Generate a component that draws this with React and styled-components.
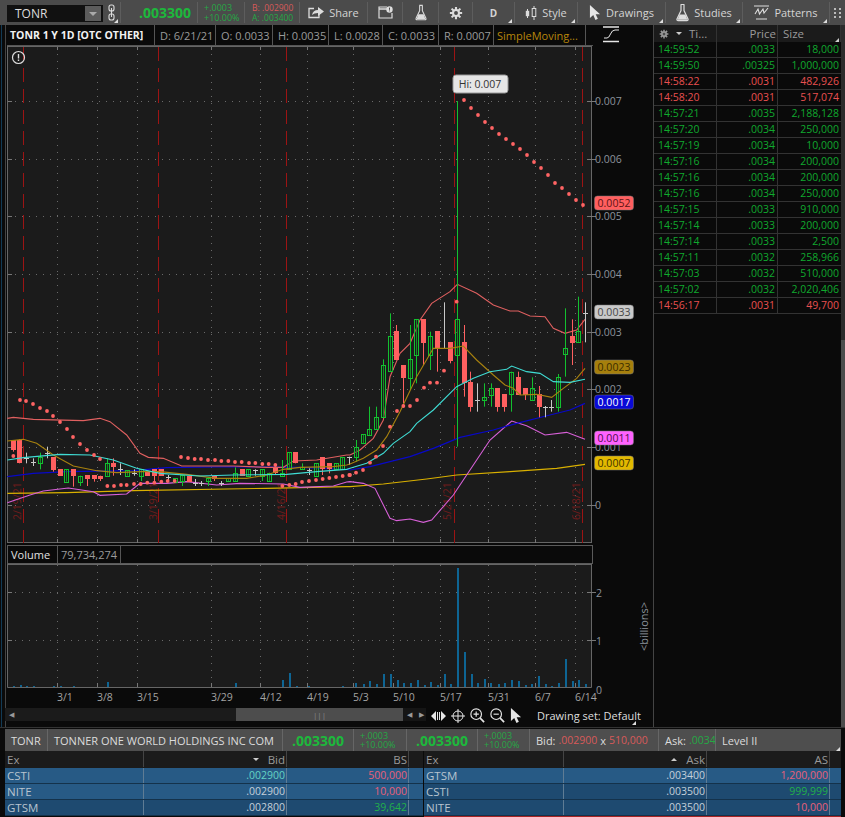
import React from 'react';
import styled, { createGlobalStyle } from 'styled-components';

const GlobalStyle = createGlobalStyle`
  html, body {
    margin: 0;
    width: 845px;
    height: 817px;
    overflow: hidden;
    background: #0a0a0a;
    font-family: "Open Sans", "Liberation Sans", sans-serif;
    font-size: 11px;
  }
  * { box-sizing: border-box; }
`;

const Page = styled.div`
  width: 845px;
  height: 817px;
  display: flex;
  flex-direction: column;
`;

/* top toolbar */
const Toolbar = styled.div`
  height: 25px;
  display: flex;
  align-items: stretch;
  padding: 2px 0 2px 7px;
  background: #4b4b4b;
  color: #d4d4d4;
`;

const SymbolBox = styled.div`
  width: 96px;
  height: 17px;
  margin-top: 3px;
  display: flex;
  align-items: center;
  justify-content: space-between;
  padding: 0 2px 0 8px;
  background: #111;
  color: #ddd;
  font-size: 12px;
`;

const SymbolCaret = styled.div`
  width: 16px;
  height: 15px;
  background: #5c5c5c;
  display: flex;
  align-items: center;
  justify-content: center;
  &::after {
    content: '';
    border-left: 4px solid transparent;
    border-right: 4px solid transparent;
    border-top: 4px solid #aaa;
  }
`;

const ToolCell = styled.div`
  position: relative;
  width: ${p => p.$w}px;
  display: flex;
  align-items: center;
  justify-content: ${p => p.$pl ? 'flex-start' : 'center'};
  gap: 5px;
  padding-left: ${p => p.$pl || 0}px;
  border-right: ${p => p.$plain ? 'none' : '1px solid #5d5d5d'};
  font-size: ${p => p.$size || 11}px;
  font-weight: ${p => p.$bold ? 700 : 400};
  white-space: nowrap;
  ${p => p.$corner && `
    &::after {
      content: '';
      position: absolute;
      right: 2px;
      bottom: 0;
      border-left: 4px solid transparent;
      border-bottom: 4px solid #ddd;
    }
  `}
`;

const BigPrice = styled.span`
  color: #1db83c;
  font-weight: 700;
  font-size: 14px;
`;

const TwoLine = styled.div`
  display: flex;
  flex-direction: column;
  font-size: ${p => p.$size || 9}px;
  line-height: 9.5px;
`;

const Tiny = styled.span`
  color: ${p => p.$red ? '#d85a5a' : '#25a845'};
  font-size: ${p => p.$size ? `${p.$size}px` : 'inherit'};
`;

/* main area */
const Main = styled.div`
  height: 702px;
  display: flex;
`;

const ChartColumn = styled.div`
  width: 654px;
  display: flex;
  flex-direction: column;
  border-right: 1px solid #444;
  background: linear-gradient(to right, #0a0a0a 1px, #123a55 1px, #123a55 2px, #0a0a0a 2px, #0a0a0a 5px, #444 5px, #444 6px, #0a0a0a 6px);
`;

const LegendRow = styled.div`
  height: 21px;
  margin-left: 7px;
  display: flex;
  align-items: stretch;
`;

const LegendBar = styled.div`
  width: 586px;
  display: flex;
  background: #0a0a0a;
  border-bottom: 1px solid #555;
`;

const LegendCell = styled.div`
  width: ${p => p.$w}px;
  display: flex;
  align-items: center;
  padding-left: ${p => p.$pad ?? 5}px;
  color: ${p => p.$color || '#9a9a9a'};
  font-weight: ${p => p.$bold ? 700 : 400};
  font-size: ${p => p.$bold ? 10.5 : 11}px;
  border-right: 1px solid #555;
  white-space: nowrap;
  overflow: hidden;
`;

const StudyButton = styled.div`
  padding: 1px 0 0 10px;
`;

const VolumeLegend = styled.div`
  height: 19px;
  margin: 2px 0 0 7px;
  width: 586px;
  display: flex;
  background: #0a0a0a;
  border: 1px solid #5a5a5a;
`;

const PlotSvg = styled.svg`
  display: block;
  flex: none;
`;

const AxisText = styled.text`
  fill: #8c939b;
  font-size: 10.5px;
  dominant-baseline: central;
`;

const BillionsText = styled(AxisText)`
  font-size: 11px;
`;

const BadgeText = styled.text`
  font-size: 10.5px;
  dominant-baseline: central;
  text-anchor: middle;
`;

const DateText = styled.text`
  fill: #a3a3a3;
  font-size: 10.5px;
`;

const MarkerText = styled.text`
  fill: #701c1c;
  font-size: 10.5px;
`;

const ScrollRow = styled.div`
  height: 20px;
  margin-left: 5px;
  display: flex;
  align-items: flex-start;
  padding-top: 1px;
  color: #ddd;
`;

const Track = styled.div`
  width: 398px;
  height: 13px;
  display: flex;
  justify-content: flex-end;
  background: #1b1b1b;
`;

const Thumb = styled.div`
  width: 167px;
  height: 13px;
  background: #4d4d4d;
  display: flex;
  align-items: center;
  justify-content: center;
  color: #888;
  font-size: 8px;
`;

const ArrowBtn = styled.div`
  width: ${p => p.$w || 13}px;
  height: 13px;
  background: #151515;
  color: #999;
  font-size: 7px;
  display: flex;
  align-items: center;
  justify-content: center;
`;

const TrackStartArrow = styled(ArrowBtn)`
  position: relative;
  margin-right: -13px;
  background: transparent;
`;

const ScrollTools = styled.div`
  display: flex;
  align-items: center;
  gap: 5px;
  margin-left: 5px;
  height: 15px;
`;

const DrawingSet = styled.div`
  position: relative;
  width: 116px;
  height: 15px;
  padding-left: 15px;
  font-size: 11px;
  line-height: 15px;
  color: #ddd;
  white-space: nowrap;
  &::after {
    content: '';
    position: absolute;
    right: 2px;
    bottom: -2px;
    border-left: 4px solid transparent;
    border-bottom: 4px solid #ddd;
  }
`;

/* time and sales */
const TimeSales = styled.div`
  flex: 1;
  display: flex;
  position: relative;
  background: #0a0a0a;
`;

const TsTable = styled.div`
  width: 187px;
`;

const TsHeader = styled.div`
  height: 17px;
  display: grid;
  grid-template-columns: 63px 61px 63px;
  background: #1b1b1b;
  color: #9a9a9a;
`;

const TsHeadCell = styled.div`
  position: relative;
  display: flex;
  align-items: center;
  justify-content: ${p => p.$align || 'flex-start'};
  gap: 7px;
  padding: 0 ${p => p.$pr ?? 5}px 0 5px;
  border-right: 1px solid #333;
  font-size: 11.5px;
  ${p => p.$corner && `
    &::after {
      content: '';
      position: absolute;
      right: 1px;
      bottom: 0;
      border-left: 4px solid transparent;
      border-bottom: 4px solid #ccc;
    }
  `}
`;

const Caret = styled.span`
  border-left: 3px solid transparent;
  border-right: 3px solid transparent;
  ${p => p.$up ? 'border-bottom: 3px solid #ccc;' : 'border-top: 3px solid #ccc;'}
`;

const TsRow = styled.div`
  height: 16px;
  display: grid;
  grid-template-columns: 63px 61px 63px;
  border-bottom: 1px solid #333;
  color: ${p => p.$sell ? '#e85050' : '#10a82e'};
  font-size: 10.5px;
  line-height: 15px;
`;

const TsCell = styled.div`
  text-align: ${p => p.$right ? 'right' : 'left'};
  padding: ${p => p.$right ? '0 2px 0 0' : '0 0 0 4px'};
  border-right: ${p => p.$last ? 'none' : '1px solid #333'};
  white-space: nowrap;
`;

const ScrollEdge = styled.div`
  flex: 1;
  background: linear-gradient(to bottom, #2c2c2c 315px, #4c4c4c 315px);
`;

/* level II */
const Bottom = styled.div`
  flex: 1;
  padding: 1px 4px 0 5px;
  border-top: 1px solid #333;
`;

const QuoteBar = styled.div`
  height: 22px;
  display: flex;
  background: #4e4e4e;
  color: #dcdcdc;
  font-size: 11px;
`;

const QuoteCell = styled.div`
  position: relative;
  width: ${p => p.$w}px;
  flex: ${p => p.$w ? 'none' : 1};
  display: flex;
  align-items: center;
  justify-content: ${p => p.$center ? 'center' : 'flex-start'};
  gap: 3px;
  padding-left: ${p => p.$center ? 0 : 6}px;
  border-right: ${p => p.$last ? 'none' : '1px solid #666'};
  white-space: nowrap;
  overflow: hidden;
  ${p => p.$last && `
    &::after {
      content: '';
      position: absolute;
      right: 1px;
      bottom: 0;
      border-left: 4px solid transparent;
      border-bottom: 4px solid #ddd;
    }
  `}
`;

const Books = styled.div`
  display: flex;
  gap: 1px;
`;

const BookTable = styled.div`
  width: ${p => p.$w}px;
  display: flex;
  flex-direction: column;
  border-bottom: 1px solid ${p => p.$alert ? '#a82424' : 'transparent'};
`;

const BookRow = styled.div`
  height: ${p => p.$h || 16}px;
  display: grid;
  grid-template-columns: ${p => p.$cols};
  background: ${p => p.$bg};
  border-bottom: 1px solid ${p => p.$head ? '#1b1b1b' : '#14324b'};
  color: ${p => p.$head ? '#999' : '#b8c4cf'};
  font-size: 11.5px;
  line-height: 15px;
`;

const BookCell = styled.div`
  display: flex;
  align-items: center;
  justify-content: ${p => p.$right ? 'flex-end' : 'flex-start'};
  gap: 9px;
  padding: 0 ${p => p.$right ? 1 : 2}px;
  color: ${p => p.$color || 'inherit'};
  font-size: ${p => p.$num ? 10.5 : 11.5}px;
  border-right: 1px solid ${p => p.$line || 'transparent'};
`;

const GREEN = '#13c02f';
const RED = '#ff6060';
const WHITE = '#c8c8c8';
const z6 = ([x, y]) => [x / 3, 380 + y / 3];
const z5 = ([x, y]) => [350 + x / 3, 280 + y / 3];
const line = pts => pts.map(p => p.join(',')).join(' ');

// [x, wickTop, wickBottom, bodyTop, bodyBottom, kind]
const leftCandles = [
  [40, 180, 215, 180, 210, 'r'], [58, 178, 250, 180, 250, 'r'], [79, 218, 250, 235, 236, 'w'], [100, 235, 258, 245, 246, 'w'],
  [119, 218, 268, 232, 250, 'g'], [140, 200, 235, 220, 221, 'w'], [160, 232, 275, 232, 270, 'r'], [181, 268, 288, 268, 288, 'r'],
  [199, 268, 305, 268, 305, 'g'], [220, 268, 320, 268, 288, 'r'], [241, 287, 318, 287, 305, 'g'], [262, 285, 318, 285, 297, 'r'],
  [281, 285, 305, 285, 297, 'r'], [301, 287, 303, 287, 297, 'r'], [322, 235, 287, 250, 287, 'g'], [340, 235, 287, 250, 262, 'r'],
  [361, 250, 285, 268, 269, 'w'], [382, 270, 287, 270, 287, 'g'], [402, 268, 287, 280, 281, 'w'], [422, 268, 303, 268, 287, 'g'],
  [442, 275, 287, 275, 287, 'r'], [463, 268, 303, 268, 287, 'r'], [484, 268, 287, 268, 287, 'r'], [503, 285, 305, 292, 293, 'w'],
  [524, 295, 305, 295, 305, 'g'], [545, 285, 318, 285, 303, 'g'], [566, 287, 305, 287, 305, 'r'], [584, 297, 318, 308, 309, 'w'],
  [604, 303, 318, 308, 309, 'w'], [625, 295, 318, 295, 303, 'g'], [643, 287, 303, 287, 297, 'r'], [664, 303, 318, 308, 309, 'w'],
  [685, 295, 303, 295, 303, 'g'], [706, 262, 303, 278, 303, 'g'], [725, 268, 287, 268, 287, 'r'], [745, 268, 287, 268, 287, 'g'],
  [766, 268, 287, 270, 271, 'w'], [787, 268, 303, 268, 287, 'g'], [806, 278, 303, 278, 303, 'g'], [826, 265, 285, 265, 280, 'r'],
  [847, 240, 287, 278, 287, 'g'], [868, 217, 268, 217, 268, 'g'], [886, 217, 250, 217, 250, 'r'], [907, 250, 268, 260, 268, 'g'],
  [928, 265, 285, 270, 271, 'w'], [947, 250, 287, 250, 287, 'g'], [967, 232, 285, 232, 268, 'r'], [988, 250, 280, 250, 268, 'r'],
  [1009, 250, 268, 250, 268, 'g'], [1027, 232, 268, 232, 268, 'g'], [1048, 230, 255, 232, 233, 'w'],
];

const rightCandles = [
  [18, 480, 545, 500, 532, 'g'], [39, 463, 490, 463, 490, 'g'], [58, 380, 465, 448, 465, 'g'], [79, 380, 448, 412, 448, 'g'],
  [100, 238, 412, 256, 412, 'g'], [121, 100, 274, 168, 274, 'g'], [139, 135, 240, 153, 240, 'r'], [160, 255, 370, 255, 293, 'r'],
  [181, 135, 330, 238, 293, 'g'], [199, 118, 310, 118, 224, 'g'], [220, 118, 255, 118, 188, 'r'], [241, 155, 270, 168, 224, 'g'],
  [262, 153, 275, 153, 207, 'r'], [281, 67, 205, 203, 204, 'w'], [301, 186, 250, 186, 243, 'r'], [322, -537, 500, 118, 224, 'g'],
  [343, 135, 350, 186, 310, 'r'], [361, 275, 395, 305, 380, 'r'], [382, 310, 395, 360, 361, 'w'], [403, 310, 380, 352, 360, 'g'],
  [424, 310, 380, 325, 345, 'g'], [442, 325, 395, 325, 380, 'r'], [463, 342, 395, 342, 380, 'r'], [484, 275, 395, 275, 343, 'g'],
  [503, 275, 345, 292, 345, 'r'], [524, 325, 360, 325, 345, 'r'], [545, 292, 360, 325, 360, 'g'], [566, 318, 412, 343, 380, 'r'],
  [584, 378, 412, 380, 381, 'w'], [604, 360, 395, 380, 381, 'w'], [625, 282, 395, 292, 380, 'g'], [646, 85, 290, 205, 223, 'g'],
  [665, 118, 255, 168, 188, 'r'], [685, 50, 187, 153, 187, 'g'], [706, 67, 187, 100, 101, 'w'],
];

const candles = [
  ...leftCandles.map(([x, a, b, c, d, k]) => [x / 3, 380 + a / 3, 380 + b / 3, 380 + c / 3, 380 + d / 3, k]),
  ...rightCandles.map(([x, a, b, c, d, k]) => [350 + x / 3, 280 + a / 3, 280 + b / 3, 280 + c / 3, 280 + d / 3, k]),
];

const upperBand = [
  ...[[22, 115], [40, 112], [100, 118], [250, 122], [300, 115], [330, 125], [380, 165], [420, 220], [445, 232], [490, 235], [545, 258], [700, 258], [800, 262], [850, 262], [880, 243], [950, 240], [1040, 225]].map(z6),
  ...[[0, 525], [30, 510], [70, 475], [100, 420], [120, 290], [150, 220], [180, 190], [210, 120], [245, 70], [300, 35], [322, 13], [380, 40], [430, 75], [480, 93], [505, 93], [540, 108], [585, 110], [610, 145], [645, 160], [680, 150], [705, 118]].map(z5),
];
const olive = [
  ...[[22, 183], [70, 178], [110, 190], [160, 225], [220, 258], [290, 272], [350, 278], [420, 275], [480, 275], [560, 283], [650, 295], [740, 295], [800, 285], [850, 268], [900, 262], [1000, 260], [1040, 255]].map(z6),
  ...[[0, 552], [40, 535], [80, 510], [110, 470], [150, 395], [200, 290], [250, 205], [300, 205], [340, 198], [380, 240], [430, 285], [465, 315], [490, 325], [510, 345], [560, 343], [605, 352], [640, 325], [680, 295], [705, 265]].map(z5),
];
const cyan = [
  ...[[22, 240], [70, 233], [180, 223], [270, 225], [340, 240], [410, 265], [480, 280], [600, 288], [700, 285], [860, 283], [950, 275], [1040, 268]].map(z6),
  ...[[0, 565], [50, 550], [100, 520], [130, 490], [180, 455], [200, 430], [250, 390], [320, 320], [370, 295], [420, 275], [470, 268], [485, 258], [530, 275], [570, 280], [610, 305], [660, 307], [705, 298]].map(z5),
];
const blue = [
  ...[[22, 290], [100, 280], [200, 275], [400, 272], [500, 263], [700, 260], [900, 262], [1040, 268]].map(z6),
  ...[[0, 570], [60, 560], [180, 530], [250, 505], [330, 472], [430, 450], [500, 430], [600, 405], [660, 390], [705, 370]].map(z5),
];
const yellow = [
  ...[[22, 340], [200, 338], [400, 332], [800, 325], [1040, 320]].map(z6),
  ...[[0, 620], [100, 612], [230, 597], [320, 585], [480, 575], [620, 565], [705, 553]].map(z5),
];
const pink = [
  ...[[22, 368], [90, 345], [130, 333], [205, 324], [280, 335], [300, 346], [380, 342], [420, 310], [500, 310], [560, 305], [650, 315], [720, 310], [850, 312], [900, 322], [1000, 318], [1040, 306]].map(z6),
  ...[[0, 605], [40, 610], [75, 625], [120, 715], [140, 722], [180, 717], [220, 727], [245, 720], [310, 645], [350, 585], [420, 480], [485, 423], [530, 437], [585, 465], [650, 457], [705, 478]].map(z5),
];

const sarDots = [
  ...[[40, 228], [60, 60], [78, 63], [99, 72], [120, 84], [141, 93], [159, 108], [180, 126], [201, 147], [219, 171], [240, 192], [261, 210], [282, 225], [300, 237],
    [322, 318], [342, 318], [363, 315], [380, 315], [402, 312], [422, 312], [442, 308], [463, 308], [484, 305], [503, 303], [524, 303],
    [543, 231], [564, 234], [584, 237], [603, 237], [624, 240], [645, 240], [664, 243], [685, 243], [705, 246], [725, 246], [747, 249], [766, 249], [787, 252], [806, 252], [826, 255],
    [847, 318], [868, 315], [887, 312], [906, 306], [927, 303], [948, 300], [968, 297], [988, 294], [1008, 291], [1028, 288], [1048, 285]].map(z6),
  ...[[0, 585], [18, 578], [39, 570], [60, 548], [78, 530], [99, 498], [120, 440], [141, 393], [160, 378], [180, 378], [201, 360], [222, 323], [240, 308], [261, 308], [282, 272], [320, 65]].map(z5),
  ...[[464, 100], [471, 108], [478, 115], [485, 122], [492, 128], [499, 134], [506, 139], [513, 144], [520, 149], [527, 155], [534, 162], [541, 168], [548, 175], [555, 183], [562, 188], [569, 194], [576, 200], [583, 205]],
];

const gridX = [57, 97, 137, 211, 260, 307, 353, 393, 440, 488, 535, 575];
const gridY = [
  [101, '0.007'], [159, '0.006'], [216, '0.005'], [274, '0.004'], [332, '0.003'], [389, '0.002'], [447, '0.001'], [505, '0'],
];
const markers = [
  [23, 21, '2/19/21'], [158, 157, '3/19/21'], [286, 285, '4/16/21'], [454, 451, '5/21/21'], [582, 580, '6/18/21'],
];
const badges = [
  [203, '0.0052', '#ff5f5f', '#5c1414'],
  [312, '0.0033', '#c9c9c9', '#484848'],
  [367, '0.0023', '#a67f0c', '#3b2c00'],
  [402, '0.0017', '#0909d6', '#fff'],
  [438, '0.0011', '#ff62ff', '#50104a'],
  [463, '0.0007', '#e2b900', '#403300'],
];
const dates = ['3/1', '3/8', '3/15', '3/29', '4/12', '4/19', '5/3', '5/10', '5/17', '5/31', '6/7', '6/14'];
const volumes = [
  [12, 1], [19, 2], [25, 1], [32, 1], [52, 1], [59, 1], [72, 1], [106, 5], [234, 4], [281, 7], [288, 14], [295, 1], [307, 1], [341, 1],
  [354, 4], [362, 3], [368, 6], [375, 3], [382, 13], [389, 13], [396, 7], [402, 4], [409, 4], [416, 7], [423, 2], [429, 5], [436, 2], [443, 13],
  [449, 3], [456, 119], [463, 35], [470, 13], [476, 4], [483, 8], [489, 4], [497, 3], [503, 4], [510, 7], [517, 6], [524, 2], [530, 3], [537, 11],
  [544, 3], [550, 1], [557, 4], [564, 28], [571, 6], [577, 7], [584, 3],
];

const trades = [
  ['14:59:52', '.0033', '18,000'], ['14:59:50', '.00325', '1,000,000'], ['14:58:22', '.0031', '482,926', true], ['14:58:20', '.0031', '517,074', true],
  ['14:57:21', '.0035', '2,188,128'], ['14:57:20', '.0034', '250,000'], ['14:57:19', '.0034', '10,000'], ['14:57:16', '.0034', '200,000'],
  ['14:57:16', '.0034', '200,000'], ['14:57:16', '.0034', '250,000'], ['14:57:15', '.0033', '910,000'], ['14:57:14', '.0033', '200,000'],
  ['14:57:14', '.0033', '2,500'], ['14:57:11', '.0032', '258,966'], ['14:57:03', '.0032', '510,000'], ['14:57:02', '.0032', '2,020,406'],
  ['14:56:17', '.0031', '49,700', true],
];

const ROW_A = '#275a85';
const ROW_B = '#1e4a70';
const bids = [
  ['CSTI', '.002900', '500,000', '#e8607a', '#63d4c4', ROW_A],
  ['NITE', '.002900', '10,000', '#e8607a', '#c4d0da', ROW_A],
  ['GTSM', '.002800', '39,642', '#22b04a', '#c4d0da', ROW_B],
];
const asks = [
  ['GTSM', '.003400', '1,200,000', '#e8607a', '#c4d0da', ROW_A],
  ['CSTI', '.003500', '999,999', '#22b04a', '#c4d0da', ROW_B],
  ['NITE', '.003500', '10,000', '#e8607a', '#c4d0da', ROW_B],
];
const books = [
  { rows: bids, side: 'Bid', qty: 'BS', w: 418, cols: '139px 143px 122px 14px' },
  { rows: asks, side: 'Ask', qty: 'AS', up: true, alert: true, w: 417, cols: '140px 143px 123px 11px' },
];

const Gear = ({ size = 16, color = '#ddd' }) => (
  <svg width={size} height={size} viewBox="0 0 16 16">
    <g stroke={color} strokeWidth="2.4">
      <path d="M8 1v14M1 8h14M3 3l10 10M13 3L3 13" />
    </g>
    <circle cx="8" cy="8" r="4.6" fill={color} />
    <circle cx="8" cy="8" r="2.2" fill="#4b4b4b" />
  </svg>
);

const Flask = ({ w = 13, h = 19 }) => (
  <svg width={w} height={h} viewBox="0 0 13 19" fill="none">
    <path d="M4.5 1.5h4M5 2v5.5L1 16q-.5 1.6 1.2 1.6h8.6q1.7 0 1.2-1.6L8 7.5V2" stroke="#ddd" strokeWidth="1.2" />
    <path d="M3.6 11.5h5.8l2 5.2H1.6z" fill="#ddd" />
  </svg>
);

const Pointer = ({ w = 12, h = 15, color = '#e6e6e6' }) => (
  <svg width={w} height={h} viewBox="0 0 13 16">
    <path d="M1 0v14l3.6-3.2L7 16l2.6-1.2-2.4-4.8H12z" fill={color} />
  </svg>
);

const ZoomGlass = ({ plus }) => (
  <svg width="15" height="15" viewBox="0 0 17 17" fill="none" stroke="#e6e6e6" strokeWidth="1.3">
    <circle cx="7" cy="7" r="6" />
    <path d="M11.5 11.5L16 16" strokeWidth="1.9" />
    <path d={plus ? 'M4 7h6M7 4v6' : 'M4 7h6'} />
  </svg>
);

const Change = () => (
  <TwoLine><Tiny>+.0003</Tiny><Tiny>+10.00%</Tiny></TwoLine>
);

export default function App() {
  return (
    <Page>
      <GlobalStyle />
      <Toolbar>
        <SymbolBox>TONR<SymbolCaret /></SymbolBox>
        <ToolCell $w={18} $corner>
          <svg width="7" height="17" viewBox="0 0 7 17" fill="none" stroke="#ddd" strokeWidth="1.1">
            <rect x="1" y="1" width="5" height="6" rx="2" />
            <rect x="1" y="10" width="5" height="6" rx="2" />
            <path d="M3.5 4v9" />
          </svg>
        </ToolCell>
        <ToolCell $w={77} $pl={18}><BigPrice>.003300</BigPrice></ToolCell>
        <ToolCell $w={47} $pl={6}><Change /></ToolCell>
        <ToolCell $w={55} $pl={7}>
          <TwoLine $size={8.5}><Tiny $red>B: .002900</Tiny><Tiny>A: .003400</Tiny></TwoLine>
        </ToolCell>
        <ToolCell $w={68}>
          <svg width="16" height="13" viewBox="0 0 16 13" fill="none">
            <path d="M11 7v4.5H1V2.5h5" stroke="#ddd" strokeWidth="1.3" />
            <path d="M4 9q1-5 6-5V1l6 4.5L10 10V7Q6 7 4 9z" fill="#ddd" />
          </svg>
          Share
        </ToolCell>
        <ToolCell $w={35}>
          <svg width="15" height="13" viewBox="0 0 15 13" fill="none">
            <path d="M9 1H1v11h13V7" stroke="#ddd" strokeWidth="1.2" />
            <path d="M1 3h8" stroke="#ddd" strokeWidth="1.5" />
            <circle cx="11.5" cy="3.5" r="3.2" fill="#ddd" />
            <path d="M11.5 1.6v2.2M11.5 4.5v.8" stroke="#4b4b4b" strokeWidth="1" />
          </svg>
        </ToolCell>
        <ToolCell $w={36}><Flask w={12} h={17} /></ToolCell>
        <ToolCell $w={34}><Gear size={14} /></ToolCell>
        <ToolCell $w={42} $corner $bold $size={10}>D</ToolCell>
        <ToolCell $w={63} $corner>
          <svg width="12" height="14" viewBox="0 0 12 14" fill="#ddd" stroke="#ddd">
            <path d="M2.5 3v9M9 0v14" strokeWidth="1" />
            <rect x="1" y="5" width="3" height="5" strokeWidth="0.4" />
            <rect x="7.2" y="2.5" width="3.6" height="8" fill="#4b4b4b" strokeWidth="1" />
          </svg>
          Style
        </ToolCell>
        <ToolCell $w={88} $corner><Pointer /> Drawings</ToolCell>
        <ToolCell $w={77} $corner><Flask /> Studies</ToolCell>
        <ToolCell $w={87} $corner>
          <svg width="15" height="15" viewBox="0 0 15 15" fill="none" stroke="#ddd" strokeWidth="1.1">
            <path d="M0 1h15M2 14h11M1 9l3-5 1.5 5L9 4l1 4 4-5" />
          </svg>
          Patterns
        </ToolCell>
        <ToolCell $w={15} $plain>
          <svg width="8" height="10" viewBox="0 0 8 10" fill="#bbb">
            <rect x="0" y="0" width="2" height="2" /><rect x="5" y="0" width="2" height="2" />
            <rect x="0" y="4" width="2" height="2" /><rect x="5" y="4" width="2" height="2" />
            <rect x="0" y="8" width="2" height="2" /><rect x="5" y="8" width="2" height="2" />
          </svg>
        </ToolCell>
      </Toolbar>

      <Main>
        <ChartColumn>
          <LegendRow>
            <LegendBar>
              <LegendCell $w={148} $bold $color="#f2f2f2" $pad={3}>TONR 1 Y 1D [OTC OTHER]</LegendCell>
              <LegendCell $w={61}>D: 6/21/21</LegendCell>
              <LegendCell $w={57}>O: 0.0033</LegendCell>
              <LegendCell $w={56}>H: 0.0035</LegendCell>
              <LegendCell $w={54}>L: 0.0028</LegendCell>
              <LegendCell $w={56}>C: 0.0033</LegendCell>
              <LegendCell $w={55}>R: 0.0007</LegendCell>
              <LegendCell $w={92} $color="#b8860b" $pad={3}>SimpleMoving...</LegendCell>
            </LegendBar>
            <StudyButton>
              <svg width="18" height="17" viewBox="0 0 18 17" fill="none" stroke="#e6e6e6">
                <path d="M0 1h16M0 15.5h16" strokeWidth="1.6" />
                <path d="M1 12h3q2 0 3.5-4T12 4h4" strokeWidth="1" />
              </svg>
            </StudyButton>
          </LegendRow>

          <PlotSvg width="653" height="497" viewBox="0 46 653 497">
            <rect x="7.5" y="46.5" width="584" height="496" fill="#1b1b1b" stroke="#666" />
            {gridX.map(x => (
              <g key={x}>
                <path d={`M${x}.5 47V543`} stroke="#6a6a6a" strokeDasharray="1 6" />
                <path d={`M${x}.5 47V50M${x}.5 539V543`} stroke="#777" />
              </g>
            ))}
            {gridY.map(([y]) => (
              <g key={y}>
                <path d={`M8 ${y}.5H592`} stroke="#6a6a6a" strokeDasharray="1 6" />
                <path d={`M8 ${y}.5H12M587 ${y}.5H596`} stroke="#777" />
              </g>
            ))}
            {markers.map(([x, tx, label]) => (
              <g key={x}>
                <path d={`M${x}.5 47V543`} stroke="#9c1414" strokeDasharray="14 7" />
                <MarkerText transform={`rotate(-90 ${tx} 520)`} x={tx} y={520}>{label}</MarkerText>
              </g>
            ))}

            <polyline points={line(yellow)} fill="none" stroke="#d9b000" strokeWidth="1.1" />
            <polyline points={line(pink)} fill="none" stroke="#d860d8" strokeWidth="1.1" />
            <polyline points={line(blue)} fill="none" stroke="#0808c8" strokeWidth="1.2" />
            <polyline points={line(upperBand)} fill="none" stroke="#e06060" strokeWidth="1.1" />

            {candles.map(([x, hi, lo, top, bot, kind], i) => {
              const color = kind === 'g' ? GREEN : kind === 'r' ? RED : WHITE;
              const cx = Math.round(x) + 0.5;
              const y1 = Math.round(top);
              const h = Math.max(Math.round(bot) - y1, 1);
              return (
                <g key={i}>
                  <path d={`M${cx} ${hi}V${lo}`} stroke={color} />
                  {kind === 'w' && <path d={`M${cx - 2.5} ${y1 + 0.5}H${cx + 2.5}`} stroke={color} />}
                  {kind === 'r' && <rect x={cx - 2.5} y={y1} width="5" height={h} fill={RED} />}
                  {kind === 'g' && <rect x={cx - 2} y={y1 + 0.5} width="4" height={h} fill="#1b1b1b" fillOpacity="0.3" stroke={color} />}
                </g>
              );
            })}

            <polyline points={line(olive)} fill="none" stroke="#a8820f" strokeWidth="1.1" />
            <polyline points={line(cyan)} fill="none" stroke="#3fdcd4" strokeWidth="1.1" />
            {sarDots.map(([x, y], i) => <circle key={i} cx={x} cy={y} r="1.9" fill="#ff6464" />)}

            <rect x="453" y="75" width="55" height="18" rx="3" fill="#e6e6e6" stroke="#999" />
            <BadgeText x="480" y="84" fill="#333">Hi: 0.007</BadgeText>
            <circle cx="18.5" cy="57.5" r="6" fill="none" stroke="#ddd" strokeWidth="1.2" />
            <path d="M18.5 54v4.5M18.5 59.5v1.5" stroke="#ddd" strokeWidth="1.4" />

            {gridY.map(([y, label]) => <AxisText key={y} x="595" y={y}>{label}</AxisText>)}
            {badges.map(([y, label, bg, fg]) => (
              <g key={y}>
                <rect x="594.5" y={y - 7} width="39" height="14" rx="3" fill={bg} stroke="#777" strokeOpacity="0.5" />
                <BadgeText x="614" y={y} fill={fg}>{label}</BadgeText>
              </g>
            ))}
          </PlotSvg>

          <VolumeLegend>
            <LegendCell $w={50} $color="#e0e0e0" $pad={3}>Volume</LegendCell>
            <LegendCell $w={63} $pad={3}>79,734,274</LegendCell>
          </VolumeLegend>
          <PlotSvg width="653" height="143" viewBox="0 564 653 143">
            <path d="M7.5 564V687.5H591.5V564" fill="#1b1b1b" stroke="#666" />
            <path d="M7.5 564.5H591.5" stroke="#666" />
            {gridX.map((x, i) => (
              <g key={x}>
                <path d={`M${x}.5 565V687`} stroke="#6a6a6a" strokeDasharray="1 6" />
                <path d={`M${x}.5 683V687`} stroke="#777" />
                <DateText x={x} y={701}>{dates[i]}</DateText>
              </g>
            ))}
            {[592, 640].map(y => (
              <g key={y}>
                <path d={`M8 ${y}.5H591`} stroke="#6a6a6a" strokeDasharray="1 6" />
                <path d={`M8 ${y}.5H12M587 ${y}.5H596`} stroke="#777" />
              </g>
            ))}
            {volumes.map(([x, h]) => <rect key={x} x={x + 1} y={687 - h} width="2" height={h} fill="#0e6594" />)}
            <AxisText x="596" y="593">2</AxisText>
            <AxisText x="596" y="641">1</AxisText>
            <AxisText x="596" y="690">0</AxisText>
            <BillionsText transform="rotate(-90 643 651)" x="643" y="651">&lt;billions&gt;</BillionsText>
          </PlotSvg>

          <ScrollRow>
            <TrackStartArrow>◀</TrackStartArrow>
            <Track><Thumb>|||</Thumb></Track>
            <ArrowBtn>◀</ArrowBtn>
            <ArrowBtn $w={10}>▶</ArrowBtn>
            <ScrollTools>
              <svg width="15" height="10" viewBox="0 0 15 10" fill="#e6e6e6">
                <path d="M0 5l5-5v10zM15 5l-5-5v10z" /><rect x="6" y="1" width="1" height="8" /><rect x="8" y="1" width="1" height="8" />
              </svg>
              <svg width="14" height="14" viewBox="0 0 14 14" fill="none" stroke="#e6e6e6">
                <circle cx="7" cy="7" r="5" /><path d="M7 0v14M0 7h14" />
              </svg>
              <ZoomGlass plus />
              <ZoomGlass />
              <Pointer />
            </ScrollTools>
            <DrawingSet>Drawing set: Default</DrawingSet>
          </ScrollRow>
        </ChartColumn>

        <TimeSales>
          <TsTable>
            <TsHeader>
              <TsHeadCell>
                <Gear size={10} color="#999" /><Caret /><span>Ti...</span>
              </TsHeadCell>
              <TsHeadCell $align="flex-end" $pr={1}>Price</TsHeadCell>
              <TsHeadCell $corner>Size</TsHeadCell>
            </TsHeader>
            {trades.map(([time, price, size, sell], i) => (
              <TsRow key={i} $sell={sell}>
                <TsCell>{time}</TsCell>
                <TsCell $right>{price}</TsCell>
                <TsCell $right $last>{size}</TsCell>
              </TsRow>
            ))}
          </TsTable>
          <ScrollEdge />
        </TimeSales>
      </Main>

      <Bottom>
        <QuoteBar>
          <QuoteCell $w={43}>TONR</QuoteCell>
          <QuoteCell $w={235}>TONNER ONE WORLD HOLDINGS INC COM</QuoteCell>
          <QuoteCell $w={71} $center><BigPrice>.003300</BigPrice></QuoteCell>
          <QuoteCell $w={53}><Change /></QuoteCell>
          <QuoteCell $w={71} $center><BigPrice>.003300</BigPrice></QuoteCell>
          <QuoteCell $w={52}><Change /></QuoteCell>
          <QuoteCell $w={129}>
            Bid: <Tiny $red $size={10.5}>.002900</Tiny> x <Tiny $red $size={10.5}>510,000</Tiny>
          </QuoteCell>
          <QuoteCell $w={57}>Ask: <Tiny $size={10.5}>.0034</Tiny></QuoteCell>
          <QuoteCell $last>Level II</QuoteCell>
        </QuoteBar>
        <Books>
          {books.map(({ rows, side, qty, up, alert, w, cols }) => (
            <BookTable key={side} $w={w} $alert={alert}>
              <BookRow $head $h={17} $bg="#1b1b1b" $cols={cols}>
                <BookCell $line="#444">Ex</BookCell>
                <BookCell $right $line="#444"><Caret $up={up} />{side}</BookCell>
                <BookCell $right $line="#444">{qty}</BookCell>
                <BookCell />
              </BookRow>
              {rows.map(([ex, price, size, sizeColor, priceColor, bg]) => (
                <BookRow key={ex} $bg={bg} $cols={cols}>
                  <BookCell $line="#5f7c94">{ex}</BookCell>
                  <BookCell $right $num $line="#5f7c94" $color={priceColor}>{price}</BookCell>
                  <BookCell $right $num $line="#5f7c94" $color={sizeColor}>{size}</BookCell>
                  <BookCell />
                </BookRow>
              ))}
            </BookTable>
          ))}
        </Books>
      </Bottom>
    </Page>
  );
}
